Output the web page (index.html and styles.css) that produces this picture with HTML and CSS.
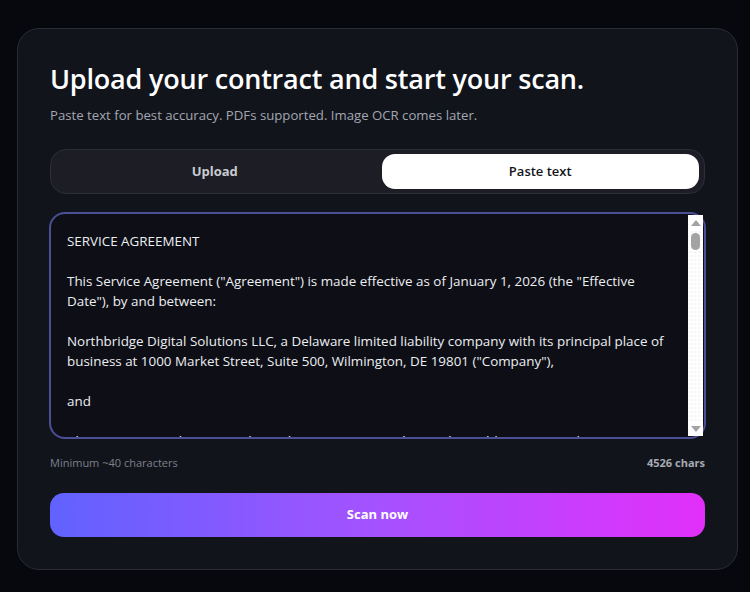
FILE: index.html
```html
<!DOCTYPE html>
<html lang="en">
  <head>
  <link rel="stylesheet" href="styles.css">
  </head>
  <body>
    <div class="card">
      <h1 class="title">Upload your contract and start your scan.</h1>
      <p class="sub">Paste text for best accuracy. PDFs supported. Image OCR comes later.</p>
      <div class="tabs">
        <button class="tab">Upload</button>
        <button class="tab active">Paste text</button>
      </div>
      <div class="field">
        <textarea class="input" id="contract">SERVICE AGREEMENT

This Service Agreement ("Agreement") is made effective as of January 1, 2026 (the "Effective Date"), by and between:

Northbridge Digital Solutions LLC, a Delaware limited liability company with its principal place of business at 1000 Market Street, Suite 500, Wilmington, DE 19801 ("Company"),

and

Alex Carter Consulting, an independent contractor with a mailing address at 742 Elm Street, Denver, CO 80203 ("Consultant").

1. SERVICES
Consultant shall provide the services described in Exhibit A (the "Services") in a professional and workmanlike manner, consistent with generally accepted industry standards.

2. TERM
This Agreement begins on the Effective Date and continues for twelve (12) months unless terminated earlier as provided herein. Thereafter, this Agreement shall renew automatically for successive one-year terms unless either party gives written notice of non-renewal at least sixty (60) days before the end of the then-current term.

3. FEES AND PAYMENT
Company shall pay Consultant the fees set forth in Exhibit B. Invoices are due within thirty (30) days of receipt. Late payments shall accrue interest at the rate of one and one-half percent (1.5%) per month, or the maximum rate permitted by law, whichever is less.

4. CONFIDENTIALITY
Each party agrees to hold the other party's Confidential Information in strict confidence and not to disclose it to any third party without prior written consent, except as required by law.

5. INTELLECTUAL PROPERTY
All work product created by Consultant under this Agreement shall be the sole and exclusive property of Company upon full payment of all fees due.

6. INDEMNIFICATION
Consultant shall indemnify, defend and hold harmless Company from any and all claims, losses and expenses arising out of Consultant's gross negligence or willful misconduct.

7. LIMITATION OF LIABILITY
In no event shall either party be liable for any indirect, incidental, special or consequential damages, even if advised of the possibility of such damages.

8. TERMINATION
Either party may terminate this Agreement for convenience upon thirty (30) days' written notice. Company may terminate immediately upon a material breach by Consultant.

9. NON-SOLICITATION
During the term and for twelve (12) months thereafter, Consultant shall not solicit any employee of Company.

10. GOVERNING LAW
This Agreement shall be governed by the laws of the State of Delaware, without regard to its conflict of laws principles.

11. ENTIRE AGREEMENT
This Agreement constitutes the entire agreement between the parties and supersedes all prior understandings, whether written or oral.</textarea>
        <div class="scrollbar">
          <span class="arrow up"></span>
          <span class="track"><span class="thumb"></span></span>
          <span class="arrow down"></span>
        </div>
      </div>
      <div class="meta">
        <span>Minimum ~40 characters</span>
        <b id="count">4526 chars</b>
      </div>
      <button class="scan">Scan now</button>
    </div>
  </body>
</html>
```

FILE: styles.css
```css
html, body { padding: 0; margin: 0; }
body {
  background: #07070e; color: #f2f3f5; height: 592px; overflow: hidden;
  font: 13.2px/1.5 "Open Sans", "Noto Sans", Arial, sans-serif;
}
button, textarea { font: inherit; }
.card {
  width: 655px; margin: 28px 0 0 17px; padding: 32px;
  background: #12141c; border: 1px solid #2a2c36; border-radius: 22px;
}
.title { margin: 0; font-size: 27px; line-height: 36px; font-weight: 600; color: #fff; letter-spacing: -0.2px; }
.sub { margin: 8px 0 24px; color: #a3a6b0; line-height: 20px; }
.tabs {
  display: flex; gap: 8px; padding: 4px 5px; height: 35px;
  background: #1c1d25; border: 1px solid #2c2e38; border-radius: 16px;
}
.tab {
  flex: 1; border: none; border-radius: 13px; background: transparent;
  color: #c9cbd2; font-size: 13px; font-weight: 700; cursor: pointer;
}
.tab.active { background: #fff; color: #14151b; font-weight: 600; }

.field { position: relative; margin: 18px 0 0 -1px; width: 657px; }
.input {
  display: block; box-sizing: border-box; width: 100%; height: 227px;
  padding: 17px 31px 0 16px; resize: none; overflow: hidden;
  background: #0e0f16; color: #eceef2; font-size: 13.4px; line-height: 20px;
  border: 2px solid #4b4f95; border-radius: 16px; outline: none;
}
/* fake classic scrollbar, the real one is hidden in the renderer */
.scrollbar {
  position: absolute; top: 3px; right: 3px; bottom: 3px; width: 15px;
  display: flex; flex-direction: column; background: #fff;
}
.arrow { height: 15px; display: flex; justify-content: center; align-items: center; }
.arrow::before { content: ""; border-left: 5px solid transparent; border-right: 5px solid transparent; }
.arrow.up::before { border-bottom: 6px solid #a3a3a3; }
.arrow.down::before { border-top: 6px solid #a3a3a3; }
.track {
  flex: 1; display: block; padding-top: 3px;
  background: radial-gradient(circle, #e3e3e3 0.6px, transparent 0.8px) center top / 4px 4px;
}
.thumb { display: block; width: 9px; height: 17px; margin: 0 auto; background: #a3a3a3; border-radius: 5px; }

.meta {
  display: flex; justify-content: space-between; margin: 16px 0 22px;
  font-size: 11px; line-height: 16px; color: #7d808b;
}
.meta b { color: #a7aab3; }
.scan {
  display: block; width: 100%; height: 44px; border: none; border-radius: 14px;
  background: linear-gradient(90deg, #6062ff, #a552ff 50%, #e12ff9);
  color: #fff; font-size: 13px; font-weight: 700; cursor: pointer;
}
```
